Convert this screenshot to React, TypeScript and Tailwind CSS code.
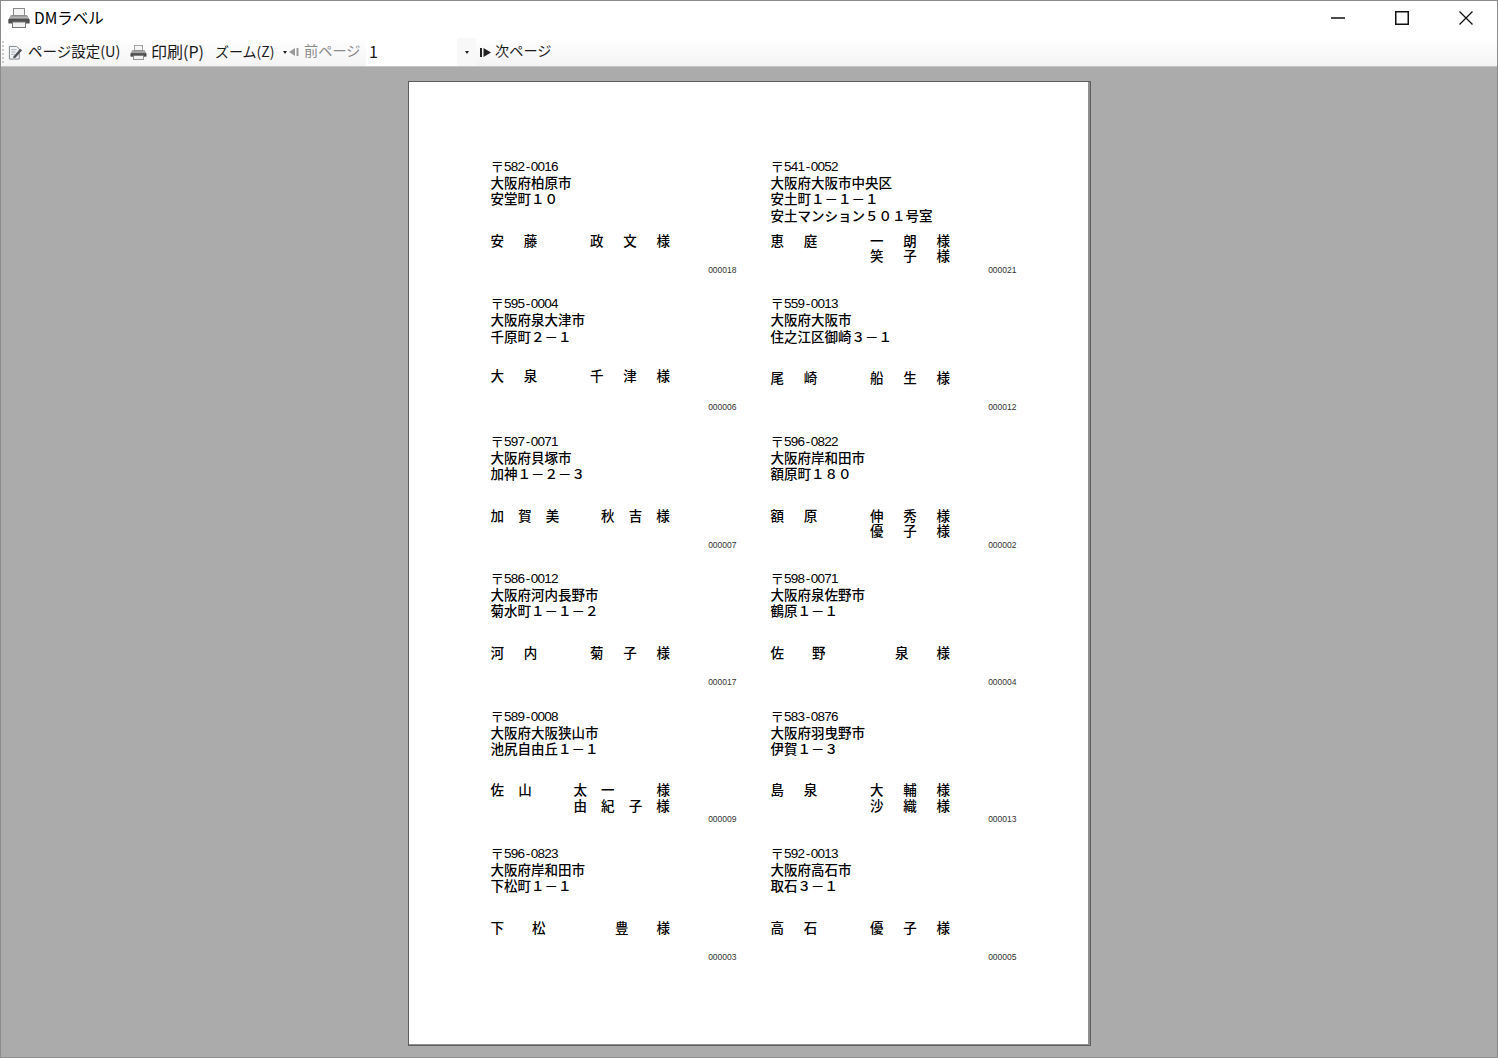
type NameLine = { text: string; at: number[] };
type Label = {
  zip: string;
  address: string[];
  names: NameLine[];
  code: string;
  nudge?: boolean;
};

const labels: Label[] = [
  { zip: "582-0016", address: ["大阪府柏原市", "安堂町１０"], names: [{ text: "安藤政文様", at: [0, 6, 18, 24, 30] }], code: "000018" },
  {
    zip: "541-0052",
    address: ["大阪府大阪市中央区", "安土町１－１－１", "安土マンション５０１号室"],
    names: [
      { text: "恵庭一朗様", at: [0, 6, 18, 24, 30] },
      { text: "笑子様", at: [18, 24, 30] },
    ],
    code: "000021",
  },
  { zip: "595-0004", address: ["大阪府泉大津市", "千原町２－１"], names: [{ text: "大泉千津様", at: [0, 6, 18, 24, 30] }], code: "000006", nudge: true },
  { zip: "559-0013", address: ["大阪府大阪市", "住之江区御崎３－１"], names: [{ text: "尾崎船生様", at: [0, 6, 18, 24, 30] }], code: "000012" },
  { zip: "597-0071", address: ["大阪府貝塚市", "加神１－２－３"], names: [{ text: "加賀美秋吉様", at: [0, 5, 10, 20, 25, 30] }], code: "000007" },
  {
    zip: "596-0822",
    address: ["大阪府岸和田市", "額原町１８０"],
    names: [
      { text: "額原伸秀様", at: [0, 6, 18, 24, 30] },
      { text: "優子様", at: [18, 24, 30] },
    ],
    code: "000002",
  },
  { zip: "586-0012", address: ["大阪府河内長野市", "菊水町１－１－２"], names: [{ text: "河内菊子様", at: [0, 6, 18, 24, 30] }], code: "000017" },
  { zip: "598-0071", address: ["大阪府泉佐野市", "鶴原１－１"], names: [{ text: "佐野泉様", at: [0, 7.5, 22.5, 30] }], code: "000004" },
  {
    zip: "589-0008",
    address: ["大阪府大阪狭山市", "池尻自由丘１－１"],
    names: [
      { text: "佐山太一様", at: [0, 5, 15, 20, 30] },
      { text: "由紀子様", at: [15, 20, 25, 30] },
    ],
    code: "000009",
  },
  {
    zip: "583-0876",
    address: ["大阪府羽曳野市", "伊賀１－３"],
    names: [
      { text: "島泉大輔様", at: [0, 6, 18, 24, 30] },
      { text: "沙織様", at: [18, 24, 30] },
    ],
    code: "000013",
  },
  { zip: "596-0823", address: ["大阪府岸和田市", "下松町１－１"], names: [{ text: "下松豊様", at: [0, 7.5, 22.5, 30] }], code: "000003" },
  { zip: "592-0013", address: ["大阪府高石市", "取石３－１"], names: [{ text: "高石優子様", at: [0, 6, 18, 24, 30] }], code: "000005" },
];

const UNIT = 5.53;

function PrinterIcon({ className }: { className: string }) {
  return (
    <svg viewBox="0 0 22 20" className={className}>
      <rect x="5.5" y="0.5" width="11" height="7" fill="#f4f4f4" stroke="#8a8a8a" />
      <path d="M2 8.5 Q2 7 4 7 H18 Q20 7 20 8.5 L21.5 12 V15 H0.5 V12 Z" fill="#8d8d8d" />
      <rect x="0.5" y="11" width="21" height="4.5" fill="#4f4f4f" />
      <rect x="2" y="8.5" width="18" height="1.5" fill="#b5b5b5" />
      <rect x="4.5" y="14" width="13" height="5.5" fill="#f2f2f2" stroke="#777" />
    </svg>
  );
}

function PageSetupIcon() {
  return (
    <svg viewBox="0 0 16 16" className="w-[15px] h-[15px] ml-[3px]">
      <path d="M1.5 1.5 H9 L12 4 V15 H1.5 Z" fill="#f0f2f5" stroke="#7c8188" />
      <path d="M3.5 5 H9 M3.5 7.5 H8 M3.5 10 H7" stroke="#a7adb5" />
      <path d="M6 12 L13 4 L15 5.5 L8 13.5 L5.5 14 Z" fill="#4c5157" />
    </svg>
  );
}

function DropDot() {
  return <span className="block w-0 h-0 border-x-[2.5px] border-x-transparent border-t-[3px] border-t-[#222]" />;
}

function LabelCell({ label }: { label: Label }) {
  return (
    <div className="h-[137.4px] text-[13.5px] text-black font-medium">
      <div className="h-[75.75px] -mt-[1px]">
        <div className="h-[17px] leading-[17px] flex font-normal translate-y-[0.5px]">
          <span>〒</span>
          <span className="font-['Liberation_Sans',sans-serif] text-[13.5px] tracking-[-0.75px] text-black">
            {label.zip.split("-")[0]}
            <span className="px-[1.4px]">-</span>
            {label.zip.split("-")[1]}
          </span>
        </div>
        {label.address.map((line) => (
          <div key={line} className="h-[16.3px] leading-[16.3px] whitespace-nowrap">
            {line}
          </div>
        ))}
      </div>
      <div className={label.nudge ? "h-[31px] -translate-y-[2px]" : "h-[31px]"}>
        {label.names.map((name) => (
          <div key={name.text} className="h-[15.5px] leading-[15.5px] flex">
            {/* 文字は帳票の桁位置に合わせて配置 */}
            <span style={{ width: name.at[0] * UNIT }} />
            {Array.from(name.text).map((ch, i) => (
              <span key={i} className="shrink-0" style={{ width: ((name.at[i + 1] ?? name.at[i] + 3) - name.at[i]) * UNIT }}>
                {ch}
              </span>
            ))}
          </div>
        ))}
      </div>
      <div className="w-[246px] h-[10px] mt-[1px] leading-[10px] text-right font-normal font-['Liberation_Sans',sans-serif] text-[8.5px] text-[#333]">
        {label.code}
      </div>
    </div>
  );
}

export default function App() {
  return (
    <div className="w-[1498px] h-[1058px] flex flex-col overflow-hidden border border-[#8c8c8c] bg-[#ababab] font-['Noto_Sans_CJK_JP','Noto_Sans',sans-serif]">
      {/* Title bar */}
      <header className="h-[37px] shrink-0 bg-white flex items-center text-black pb-[3px]">
        <PrinterIcon className="w-[22px] h-[20px] ml-[7px]" />
        <span className="ml-[4px] text-[15.5px] whitespace-nowrap">DMラベル</span>
        <div className="ml-auto flex items-center gap-[50px] mr-[24px]">
          <svg viewBox="0 0 14 14" className="w-[14px] h-[14px]">
            <path d="M0 7 H14" stroke="#111" strokeWidth="1.5" />
          </svg>
          <svg viewBox="0 0 14 14" className="w-[14px] h-[14px]">
            <rect x="0.75" y="0.75" width="12.5" height="12.5" fill="none" stroke="#111" strokeWidth="1.5" />
          </svg>
          <svg viewBox="0 0 14 14" className="w-[14px] h-[14px]">
            <path d="M0.5 0.5 L13.5 13.5 M13.5 0.5 L0.5 13.5" stroke="#111" strokeWidth="1.3" />
          </svg>
        </div>
      </header>

      {/* Toolbar */}
      <div className="h-[29px] shrink-0 flex items-center bg-gradient-to-b from-white to-[#f4f4f4] border-b border-[#c4c4c4] text-[#1a1a1a] whitespace-nowrap">
        <span className="w-[3px] h-[22px] ml-[1px] border-l-2 border-dotted border-[#ccc]" />
        <PageSetupIcon />
        <span className="ml-[5px] w-[93px] text-[14.5px] -translate-y-[1px]">ページ設定(U)</span>
        <PrinterIcon className="w-[17px] h-[15px] ml-[9px]" />
        <span className="ml-[4px] w-[52px] text-[16px] -translate-y-[1px]">印刷(P)</span>
        <span className="ml-[12px] w-[57px] text-[14px] -translate-y-[1px]">ズーム(Z)</span>
        <span className="ml-[11px]"><DropDot /></span>
        <svg viewBox="0 0 10 8" className="w-[10px] h-[8px] ml-[2px]">
          <path d="M6 0 V8 L0 4 Z" fill="#9a9a9a" />
          <rect x="7.5" y="0" width="2" height="8" fill="#9a9a9a" />
        </svg>
        <span className="ml-[5px] w-[55px] text-[14.2px] text-[#8a8a8a] -translate-y-[1px]">前ページ</span>
        <span className="ml-[7px] w-[91px] h-full bg-white pl-[3px] text-[16px] leading-[27px]">1</span>
        <span className="w-[19px] h-full bg-[#f8f8f8] flex items-center justify-center"><DropDot /></span>
        <svg viewBox="0 0 11 9" className="w-[11px] h-[9px] ml-[4px]">
          <rect x="0" y="0" width="2" height="9" fill="#222" />
          <path d="M3.5 0 V9 L11 4.5 Z" fill="#222" />
        </svg>
        <span className="ml-[4px] text-[14.2px] -translate-y-[1px]">次ページ</span>
      </div>

      {/* Preview area */}
      <main className="flex-1 flex justify-center pt-[14px]">
        <div className="w-[683px] h-[965px] bg-white border border-[#5e5e5e] shadow-[inset_-2px_-1px_0_#8f8f8f] pl-[82px] pt-[76px] grid grid-cols-[280px_280px] content-start">
          {labels.map((label) => (
            <LabelCell key={label.code} label={label} />
          ))}
        </div>
      </main>
    </div>
  );
}
